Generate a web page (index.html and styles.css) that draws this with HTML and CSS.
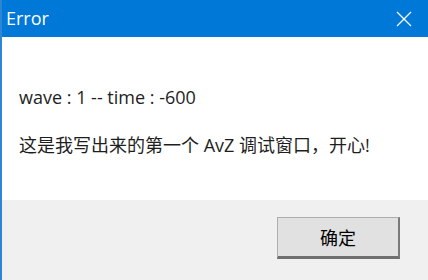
FILE: index.html
```html
<!DOCTYPE html>
<html lang="zh-CN">
	<head>
		<meta charset="UTF-8" />
		<title>Error</title>
		<link rel="stylesheet" href="styles.css">
	</head>
	<body>
		<div class="dialog">
			<div class="titlebar">
				<span class="title">Error</span>
				<button class="close" aria-label="Close">
					<svg width="16" height="16" viewBox="0 0 16 16">
						<path d="M1 1L15 15M15 1L1 15" stroke="#ffffff" stroke-width="1.3" fill="none" />
					</svg>
				</button>
			</div>
			<div class="content">
				<p>wave : 1 -- time : -600</p>
				<p>这是我写出来的第一个 AvZ 调试窗口，开心!</p>
			</div>
			<div class="footer">
				<button class="ok">确定</button>
			</div>
		</div>
	</body>
</html>
```

FILE: styles.css
```css
body {
	margin: 0;
	font-family: "Open Sans", "Noto Sans CJK SC", sans-serif;
	background: #ffffff;
}
.dialog {
	width: 428px;
	height: 280px;
	border-left: 2px solid #2b86d6;
	box-sizing: border-box;
	display: flex;
	flex-direction: column;
}
.titlebar {
	height: 37px;
	background: #0078d7;
	color: #ffffff;
	display: flex;
	align-items: center;
	justify-content: space-between;
	padding-left: 4px;
}
.title {
	font-size: 18px;
	margin-top: -1px;
}
.close {
	width: 46px;
	height: 37px;
	border: none;
	background: none;
	display: flex;
	align-items: center;
	justify-content: center;
	padding: 0;
	margin-right: 1px;
}
.content {
	height: 163px;
	background: #ffffff;
	padding: 48px 17px 0;
	box-sizing: border-box;
	color: #1e1e1e;
	font-size: 18px;
}
.content p {
	margin: 0 0 24px;
	line-height: 24px;
	height: 24px;
}
.footer {
	flex: 1;
	background: #f0f0f0;
	display: flex;
	justify-content: flex-end;
	align-items: flex-start;
	padding: 17px 28px 0 0;
}
.ok {
	width: 123px;
	height: 42px;
	background: #e1e1e1;
	border: 1px solid #adadad;
	border-right: 2px solid #7a7a7a;
	border-bottom: 3px solid #6f6f6f;
	font-family: "Noto Sans CJK SC", sans-serif;
	font-size: 18px;
	color: #000000;
	padding: 0;
}
```
